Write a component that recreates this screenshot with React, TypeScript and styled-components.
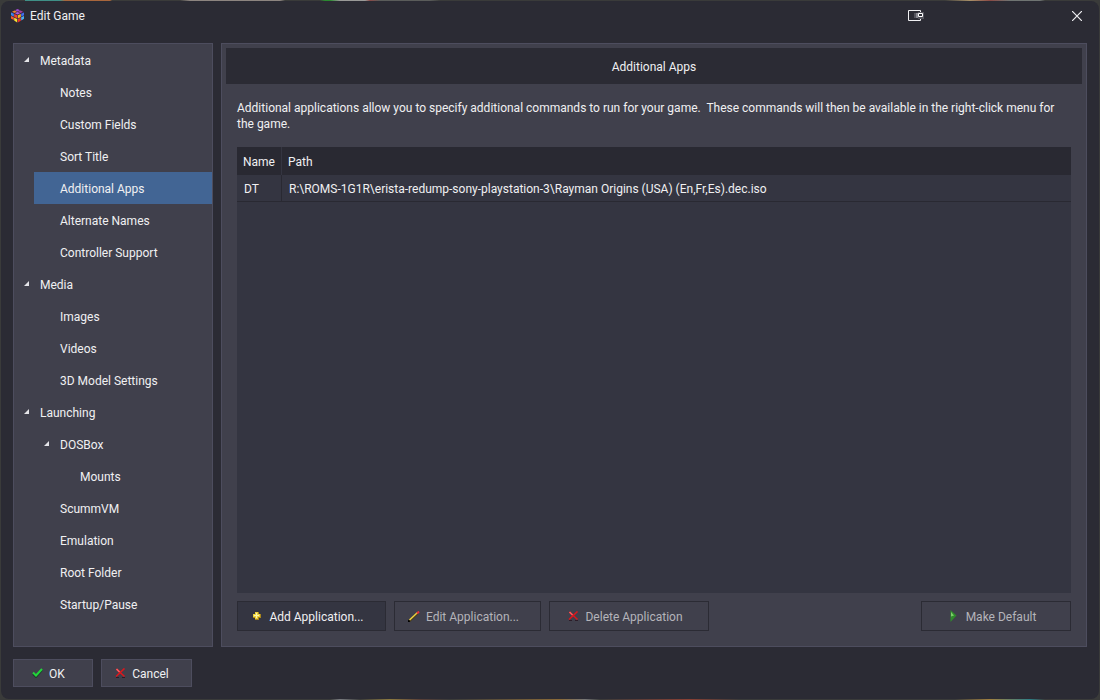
import React from "react";
import styled, { createGlobalStyle, css } from "styled-components";

const Global = createGlobalStyle`
  *, *::before, *::after { box-sizing: border-box; }
  body {
    margin: 0;
    background: #3a3b3a;
    color: #f0f0f2;
    font: 12px/16px Roboto, "Open Sans", sans-serif;
  }
  button { font: inherit; color: inherit; }
`;

const Desktop = styled.div`
  min-height: 100vh;
  display: flex;
  padding: 1px;
  background:
    linear-gradient(90deg, #3a3b3a 0 25px, #3f8f86 25px 60px, #a8663c 65px 110px, #3a3b3a 112px 180px, #8d8580 190px 280px, #3a3b3a 285px 320px, #2a8a30 325px 330px, #9a9a98 340px 365px, #8a4a48 370px, #5a5c5a 380px 430px, #3a3b3a 440px 945px, #a89068 970px, #8a4a44 990px, #6f7472 1010px 1040px, #3a3b3a 1045px) top / 100% 1px no-repeat,
    linear-gradient(90deg, #3a3b3a 0 330px, #7a7c80 340px, #3a3b3a 360px, #8c7a40 390px, #5a4038 420px, #3a3b3a 450px, #8a6a38 560px, #777 585px, #3a3b3a 600px, #8a4034 690px, #3a3b3a 740px 955px, #a08040 990px, #2f7f86 1030px, #3a3b3a 1045px) bottom / 100% 1px no-repeat,
    #3a3b3a;
`;

const Dialog = styled.section`
  flex: 1;
  min-width: 0;
  display: flex;
  flex-direction: column;
  padding: 0 12px 12px;
  border-radius: 8px;
  background: #2b2b34;
`;

const TitleBar = styled.header`
  display: flex;
  align-items: center;
  height: 42px;
  margin: 0 -2px;
  padding-bottom: 12px;
`;

const Title = styled.h1`
  flex: 1;
  margin: 0 0 0 6px;
  font-size: 12px;
  font-weight: 400;
`;

const TitleButton = styled.button<{ $gap: number }>`
  display: flex;
  padding: 0;
  border: 0;
  margin-right: ${(p) => p.$gap}px;
  background: none;
`;

const Columns = styled.div`
  flex: 1;
  display: grid;
  grid-template-columns: 200px minmax(0, 1fr);
  gap: 8px;
`;

const panel = css`
  border: 1px solid #4d4d5e;
  background: #40404c;
`;

const Sidebar = styled.nav`
  ${panel}
`;

const Tree = styled.ul`
  margin: 0;
  padding: 0;
  list-style: none;
`;

const TreeRow = styled.button<{ $level: number; $selected?: boolean }>`
  display: flex;
  align-items: center;
  width: calc(100% - ${(p) => p.$level * 20}px);
  height: 32px;
  margin-left: ${(p) => p.$level * 20}px;
  padding: 2px 0 0 10px;
  border: 0;
  background: ${(p) => (p.$selected ? "#426594" : "transparent")};
  text-align: left;
`;

const ArrowSlot = styled.span`
  width: 16px;
  height: 8px;
`;

const Arrow = styled.svg`
  display: block;
`;

const Main = styled.main`
  ${panel}
  display: flex;
  flex-direction: column;
  padding: 4px;
`;

const PageTitle = styled.h2`
  margin: 0;
  padding: 11px 0 9px;
  background: #2b2b34;
  font-size: 12px;
  font-weight: 400;
  text-align: center;
`;

const Page = styled.div`
  flex: 1;
  display: flex;
  flex-direction: column;
  padding: 16px 11px 11px;
`;

const Intro = styled.p`
  margin: 0 0 15px;
  white-space: pre-wrap;
`;

const Grid = styled.div`
  flex: 1;
  margin-bottom: 8px;
  background: #343541;
`;

const Table = styled.table`
  width: 100%;
  border-collapse: separate;
  border-spacing: 0;
`;

const HeadCell = styled.th`
  height: 28px;
  padding: 2px 6px 0;
  background: #292932;
  font-weight: 400;
  text-align: left;
  &:first-child { width: 44px; border-right: 1px solid #343541; }
`;

const Cell = styled.td`
  height: 27px;
  padding: 2px 7px 0;
  border-bottom: 1px solid #292932;
  &:first-child { border-right: 1px solid #292932; }
`;

const Actions = styled.div`
  display: flex;
  gap: 8px;
`;

const Spacer = styled.span`
  flex: 1;
`;

const IconSlot = styled.span`
  display: flex;
  align-items: center;
  justify-content: center;
  width: 16px;
  height: 16px;
  padding-bottom: 2px;
`;

const ActionButton = styled.button<{ $width: number }>`
  display: flex;
  align-items: center;
  justify-content: center;
  gap: 4px;
  width: ${(p) => p.$width}px;
  height: 30px;
  padding: 2px 10px 0 0;
  border: 1px solid #2b2b34;
  background: #343541;
  white-space: nowrap;
  &:disabled { background: #40404c; color: #b4b4ba; }
`;

const Footer = styled.footer`
  display: flex;
  gap: 8px;
  margin-top: 12px;
`;

const FooterButton = styled.button<{ $width: number }>`
  ${panel}
  display: flex;
  align-items: center;
  justify-content: center;
  gap: 4px;
  width: ${(p) => p.$width}px;
  height: 28px;
  padding: 2px 12px 0 0;
`;

const CubeIcon = () => (
  <svg width="13" height="14" viewBox="0 0 13 14" aria-hidden="true">
    <path d="M6.500 0L13 3v7l-6.500 4L0 10V3z" fill="#3a2448" />
    <path d="M6.500 0L9 1.200 6.500 2.400 4 1.200z" fill="#a04bd0" />
    <path d="M3.500 1.500L6 2.700 3.500 3.900 1 2.700z" fill="#e8862c" />
    <path d="M9.500 1.500L12 2.700 9.500 3.900 7 2.700z" fill="#a8409c" />
    <path d="M6.500 3L9 4.200 6.500 5.400 4 4.200z" fill="#b05ae0" />
    <path d="M0 3.500l2.800 1.300v2.700L0 6.200z" fill="#3a86f0" />
    <path d="M3.200 5L6.200 6.300v3L3.200 8z" fill="#f0402c" />
    <path d="M0 7l2.800 1.300V11L0 9.500z" fill="#f0602c" />
    <path d="M3.200 8.700l3 1.400v3.500l-3-2z" fill="#f4e42c" />
    <path d="M6.800 6.300L9.800 5v3l-3 1.400z" fill="#f4b41e" />
    <path d="M10.200 4.800L13 3.500v2.700l-2.800 1.300z" fill="#3e70f0" />
    <path d="M6.800 10.100l3-1.400v3l-3 1.900z" fill="#e83428" />
    <path d="M10.200 8.300L13 7v2.700l-2.800 1.700z" fill="#4ab0f0" />
  </svg>
);

const MonitorIcon = () => (
  <svg width="16" height="12" viewBox="0 0 16 12" aria-hidden="true">
    <path d="M.5 .5h12v10H.5z" fill="#2b2b34" stroke="#f0f0f2" />
    <path d="M6 3h2v5H6z" fill="#55555e" />
    <path d="M8 3h2v5H8z" fill="#8a8a92" />
    <path d="M10 2h6v7h-6z" fill="#55555e" />
    <path d="M10.500 3.500h4v3h-4z" fill="#2b2b34" stroke="#fff" />
  </svg>
);

const CloseIcon = () => (
  <svg width="10" height="10" viewBox="0 0 10 10" aria-hidden="true">
    <path d="M0 0l10 10M10 0L0 10" stroke="#f0f0f2" strokeWidth="1.200" />
  </svg>
);

const CheckIcon = () => (
  <svg width="11" height="10" viewBox="0 0 11 10" aria-hidden="true">
    <path d="M1 6l3 3 6-7" fill="none" stroke="#1d3a2a" strokeWidth="2" />
    <path d="M1 4.500l3 3L10 1" fill="none" stroke="#22d43a" strokeWidth="2" />
  </svg>
);

const CrossIcon = () => (
  <svg width="11" height="10" viewBox="0 0 11 10" aria-hidden="true">
    <path d="M1 9.500h3M7 9.500h3" stroke="#2c1c28" />
    <path d="M1.500 1l8 7.500M9.500 .5L1 8.500" fill="none" stroke="#dc161c" strokeWidth="1.600" />
    <path d="M1.500 1l3 3" stroke="#ff5a5e" strokeWidth="1.600" />
  </svg>
);

const PlusIcon = () => (
  <svg width="10" height="10" viewBox="0 0 10 10" aria-hidden="true">
    <path d="M3 1h4v2h2v4H7v2H3V7H1V3h2z" fill="#a8841c" />
    <path d="M3 1h3v2h2v3H6v2H3V6H1V3h2z" fill="#ecd23c" />
    <path d="M4 2h1v2h2v1H5v2H4V5H2V4h2z" fill="#fdf6b0" />
  </svg>
);

const PencilIcon = () => (
  <svg width="12" height="11" viewBox="0 0 12 11" aria-hidden="true">
    <path d="M1 10.500l8.500-8" stroke="#4a3c18" strokeWidth="2" />
    <path d="M1.500 9l8-7.500" stroke="#ecd040" strokeWidth="1.500" />
    <path d="M9 2.500L11 .5" stroke="#e8303a" strokeWidth="2" />
    <path d="M0 11l1.500-1.500" stroke="#000" strokeWidth="2" />
  </svg>
);

const PlayIcon = () => (
  <svg width="7" height="12" viewBox="0 0 7 12" aria-hidden="true">
    <path d="M.5 0L6.500 5.500.5 12z" fill="#2f8a2c" />
    <path d="M1 2l3 3.500L1 6.500z" fill="#7ccf68" />
  </svg>
);

interface TreeItem {
  label: string;
  selected?: boolean;
  children?: TreeItem[];
}

const tree: TreeItem[] = [
  {
    label: "Metadata",
    children: [
      { label: "Notes" },
      { label: "Custom Fields" },
      { label: "Sort Title" },
      { label: "Additional Apps", selected: true },
      { label: "Alternate Names" },
      { label: "Controller Support" },
    ],
  },
  {
    label: "Media",
    children: [{ label: "Images" }, { label: "Videos" }, { label: "3D Model Settings" }],
  },
  {
    label: "Launching",
    children: [
      { label: "DOSBox", children: [{ label: "Mounts" }] },
      { label: "ScummVM" },
      { label: "Emulation" },
      { label: "Root Folder" },
      { label: "Startup/Pause" },
    ],
  },
];

const TreeLevel = ({ items, level }: { items: TreeItem[]; level: number }) => (
  <Tree>
    {items.map((item) => (
      <li key={item.label}>
        <TreeRow
          type="button"
          $level={level}
          $selected={item.selected}
          aria-current={item.selected ? "page" : undefined}
          aria-expanded={item.children ? true : undefined}
        >
          <ArrowSlot>
            {item.children && (
              <Arrow width="5" height="5" viewBox="0 0 5 5" aria-hidden="true">
                <path d="M5 0v5H0z" fill="#e4e4e8" />
              </Arrow>
            )}
          </ArrowSlot>
          {item.label}
        </TreeRow>
        {item.children && <TreeLevel items={item.children} level={level + 1} />}
      </li>
    ))}
  </Tree>
);

const apps = [
  { name: "DT", path: "R:\\ROMS-1G1R\\erista-redump-sony-playstation-3\\Rayman Origins (USA) (En,Fr,Es).dec.iso" },
];

export default function App() {
  return (
    <Desktop>
      <Global />
      <Dialog>
        <TitleBar>
          <CubeIcon />
          <Title>Edit Game</Title>
          <TitleButton type="button" aria-label="Move to display" $gap={148}>
            <MonitorIcon />
          </TitleButton>
          <TitleButton type="button" aria-label="Close" $gap={7}>
            <CloseIcon />
          </TitleButton>
        </TitleBar>
        <Columns>
          <Sidebar aria-label="Sections">
            <TreeLevel items={tree} level={0} />
          </Sidebar>
          <Main>
            <PageTitle>Additional Apps</PageTitle>
            <Page>
              <Intro>
                {"Additional applications allow you to specify additional commands to run for your game.  These commands will then be available in the right-click menu for the game."}
              </Intro>
              <Grid>
                <Table>
                  <thead>
                    <tr>
                      <HeadCell scope="col">Name</HeadCell>
                      <HeadCell scope="col">Path</HeadCell>
                    </tr>
                  </thead>
                  <tbody>
                    {apps.map((app) => (
                      <tr key={app.name}>
                        <Cell>{app.name}</Cell>
                        <Cell>{app.path}</Cell>
                      </tr>
                    ))}
                  </tbody>
                </Table>
              </Grid>
              <Actions>
                <ActionButton type="button" $width={149}>
                  <IconSlot><PlusIcon /></IconSlot>Add Application...
                </ActionButton>
                <ActionButton type="button" disabled $width={147}>
                  <IconSlot><PencilIcon /></IconSlot>Edit Application...
                </ActionButton>
                <ActionButton type="button" disabled $width={160}>
                  <IconSlot><CrossIcon /></IconSlot>Delete Application
                </ActionButton>
                <Spacer />
                <ActionButton type="button" disabled $width={150}>
                  <IconSlot><PlayIcon /></IconSlot>Make Default
                </ActionButton>
              </Actions>
            </Page>
          </Main>
        </Columns>
        <Footer>
          <FooterButton type="button" $width={80}>
            <IconSlot><CheckIcon /></IconSlot>OK
          </FooterButton>
          <FooterButton type="button" $width={91}>
            <IconSlot><CrossIcon /></IconSlot>Cancel
          </FooterButton>
        </Footer>
      </Dialog>
    </Desktop>
  );
}
